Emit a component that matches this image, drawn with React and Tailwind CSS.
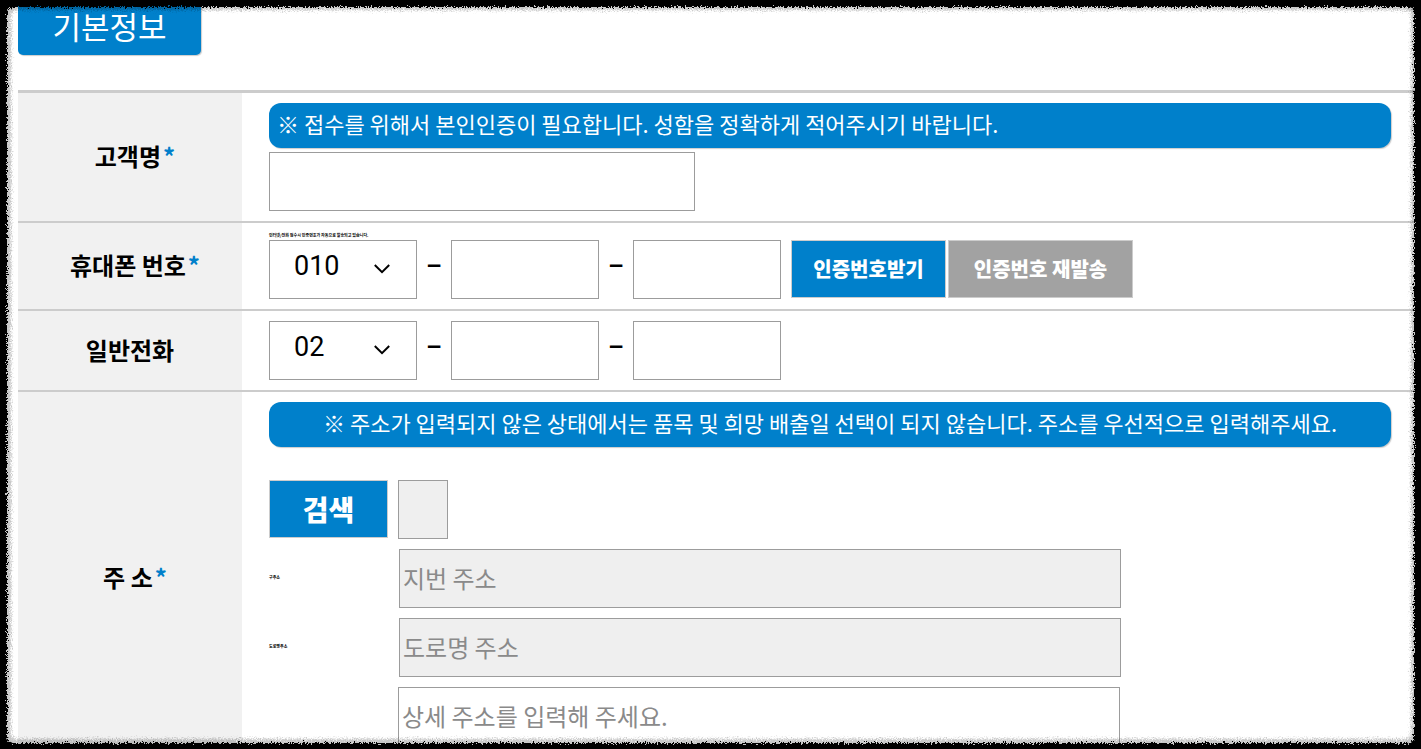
import { useState } from 'react'

const boxClass = 'h-[59px] border border-[#9c9c9c] px-[3px] pb-0.5 text-2xl text-black outline-none placeholder:text-[#8a8a8a]'

const buttonClass = 'h-[58px] border border-[#cccccc] font-black text-white'

function ChevronIcon() {
  return (
    <svg
      viewBox="0 0 16 10"
      fill="none"
      aria-hidden="true"
      className="pointer-events-none absolute top-6 right-[27px] h-[10px] w-4"
    >
      <path d="M0.8 1L8 8.2L15.2 1" stroke="black" strokeWidth="2" />
    </svg>
  )
}

// grainy black border that sits over the whole page
function RoughFrame() {
  return (
    <svg aria-hidden="true" className="pointer-events-none absolute inset-0 h-full w-full">
      <defs>
        <filter
          id="rough-soft"
          filterUnits="userSpaceOnUse"
          x="0"
          y="0"
          width="100%"
          height="100%"
          colorInterpolationFilters="sRGB"
        >
          <feGaussianBlur in="SourceGraphic" stdDeviation="1.2" result="blur" />
          <feTurbulence type="fractalNoise" baseFrequency="0.8" numOctaves="2" seed="4" result="noise" />
          <feDisplacementMap in="blur" in2="noise" scale="9" xChannelSelector="R" yChannelSelector="G" />
        </filter>
        <filter
          id="rough-dark"
          filterUnits="userSpaceOnUse"
          x="0"
          y="0"
          width="100%"
          height="100%"
          colorInterpolationFilters="sRGB"
        >
          <feGaussianBlur in="SourceGraphic" stdDeviation="0.5" result="blur" />
          <feTurbulence type="fractalNoise" baseFrequency="0.7" numOctaves="3" seed="9" result="noise" />
          <feDisplacementMap in="blur" in2="noise" scale="7" xChannelSelector="R" yChannelSelector="G" />
        </filter>
        <mask id="soft-hole">
          <rect width="100%" height="100%" fill="white" />
          <rect x="11" y="10" rx="6" fill="black" style={{ width: 'calc(100% - 21px)', height: 'calc(100% - 20px)' }} />
        </mask>
        <mask id="dark-hole">
          <rect width="100%" height="100%" fill="white" />
          <rect x="7" y="7" rx="6" fill="black" style={{ width: 'calc(100% - 14px)', height: 'calc(100% - 13px)' }} />
        </mask>
      </defs>
      <g filter="url(#rough-soft)">
        <rect width="100%" height="100%" fill="black" fillOpacity="0.22" mask="url(#soft-hole)" />
      </g>
      <g filter="url(#rough-dark)">
        <rect width="100%" height="100%" fill="black" mask="url(#dark-hole)" />
      </g>
      <path d="M0 0H5000" stroke="black" strokeWidth="8" />
      <path d="M0 0V5000" stroke="black" strokeWidth="8" />
      <rect x="0" width="100%" height="4" fill="black" style={{ y: 'calc(100% - 4px)' }} />
      <rect y="0" width="5" height="100%" fill="black" style={{ x: 'calc(100% - 5px)' }} />
    </svg>
  )
}

function Notice({ centered, children }) {
  return (
    <p
      className={`h-[45px] rounded-xl bg-[#0080cb] px-2 text-[22px] leading-10 font-normal whitespace-nowrap text-white shadow-[1px_1px_1px_#cccccc] ${
        centered ? 'text-center' : ''
      }`}
    >
      {children}
    </p>
  )
}

function Row({ label, htmlFor, required, children }) {
  return (
    <div className="flex border-b-2 border-[#cccccc]">
      <div
        className={`flex w-56 shrink-0 items-center justify-center bg-[#f1f1f1] pb-0.5 text-2xl font-bold text-black ${
          required ? 'pl-2.5' : ''
        }`}
      >
        <label htmlFor={htmlFor}>
          {label}
          {required ? <span className="ml-0.5 text-[#0080cb]">*</span> : null}
        </label>
      </div>
      <div className="min-w-0 flex-1 py-2.5 pr-[30px] pl-[27px]">{children}</div>
    </div>
  )
}

function PhoneFields({ id, name, options, children }) {
  const [prefix, setPrefix] = useState(options[0])

  return (
    <div className="flex">
      <div className="relative">
        <select
          id={id}
          value={prefix}
          onChange={(e) => setPrefix(e.target.value)}
          className="h-[59px] w-[148px] appearance-none border border-[#9c9c9c] bg-white pb-1.5 pl-6 font-[Roboto,sans-serif] text-[27px] text-black outline-none"
        >
          {options.map((option) => (
            <option key={option}>{option}</option>
          ))}
        </select>
        <ChevronIcon />
      </div>
      <span className="w-[34px] text-center text-[28px] leading-[44px] font-bold">–</span>
      <input type="tel" aria-label={`${name} 가운데 자리`} className={`${boxClass} w-[148px]`} />
      <span className="w-[34px] text-center text-[28px] leading-[44px] font-bold">–</span>
      <input type="tel" aria-label={`${name} 끝자리`} className={`${boxClass} w-[148px]`} />
      {children}
    </div>
  )
}

export default function App() {
  return (
    <main className="relative h-screen overflow-hidden bg-white font-['Noto_Sans_CJK_KR',sans-serif]">
      <form className="pl-[18px]" onSubmit={(e) => e.preventDefault()}>
        <h2 className="flex h-[55px] w-[183px] items-center justify-center rounded-b-[5px] bg-[#0080cb] pb-0.5 text-[31px] font-normal text-white shadow-[1px_1px_1px_#cccccc]">
          기본정보
        </h2>

        <div className="mt-[35px] border-t-3 border-[#cccccc]">
          <Row label="고객명" htmlFor="customer" required>
            <Notice>※ 접수를 위해서 본인인증이 필요합니다. 성함을 정확하게 적어주시기 바랍니다.</Notice>
            <input id="customer" type="text" className={`${boxClass} mt-1 block w-[426px]`} />
          </Row>

          <Row label="휴대폰 번호" htmlFor="mobile" required>
            <p className="mb-0.5 text-[4px] leading-[5px] font-bold text-black">
              인터넷/전화 접수시 인증번호가 자동으로 발송되고 있습니다.
            </p>
            <PhoneFields id="mobile" name="휴대폰 번호" options={['010', '011', '016', '017', '018', '019']}>
              <button type="button" className={`${buttonClass} ml-2.5 w-[155px] bg-[#0080cb] text-xl`}>
                인증번호받기
              </button>
              <button type="button" className={`${buttonClass} ml-0.5 w-[185px] bg-[#a2a2a2] text-xl`}>
                인증번호 재발송
              </button>
            </PhoneFields>
          </Row>

          <Row label="일반전화" htmlFor="phone">
            <PhoneFields id="phone" name="일반전화" options={['02', '031', '032', '051']} />
          </Row>

          <Row label="주 소" htmlFor="zipcode" required>
            <Notice centered>
              ※ 주소가 입력되지 않은 상태에서는 품목 및 희망 배출일 선택이 되지 않습니다. 주소를 우선적으로
              입력해주세요.
            </Notice>
            <div className="mt-[33px] flex gap-2.5">
              <button type="button" className={`${buttonClass} w-[119px] bg-[#0080cb] text-[28px]`}>
                검색
              </button>
              <input id="zipcode" type="text" readOnly className={`${boxClass} w-[50px] bg-[#efefef]`} />
            </div>
            <div className="mt-2.5 flex items-center">
              <label htmlFor="jibun" className="w-[130px] pb-1 text-[4px] font-bold">
                구주소
              </label>
              <input
                id="jibun"
                type="text"
                readOnly
                placeholder="지번 주소"
                className={`${boxClass} w-[722px] bg-[#efefef]`}
              />
            </div>
            <div className="mt-2.5 flex items-center">
              <label htmlFor="road" className="w-[130px] pb-1 text-[4px] font-bold">
                도로명주소
              </label>
              <input
                id="road"
                type="text"
                readOnly
                placeholder="도로명 주소"
                className={`${boxClass} w-[722px] bg-[#efefef]`}
              />
            </div>
            <div className="mt-2.5 mb-2 pl-[129px]">
              <input
                type="text"
                aria-label="상세 주소"
                placeholder="상세 주소를 입력해 주세요."
                className={`${boxClass} block w-[722px]`}
              />
            </div>
          </Row>
        </div>
      </form>
      <RoughFrame />
    </main>
  )
}
